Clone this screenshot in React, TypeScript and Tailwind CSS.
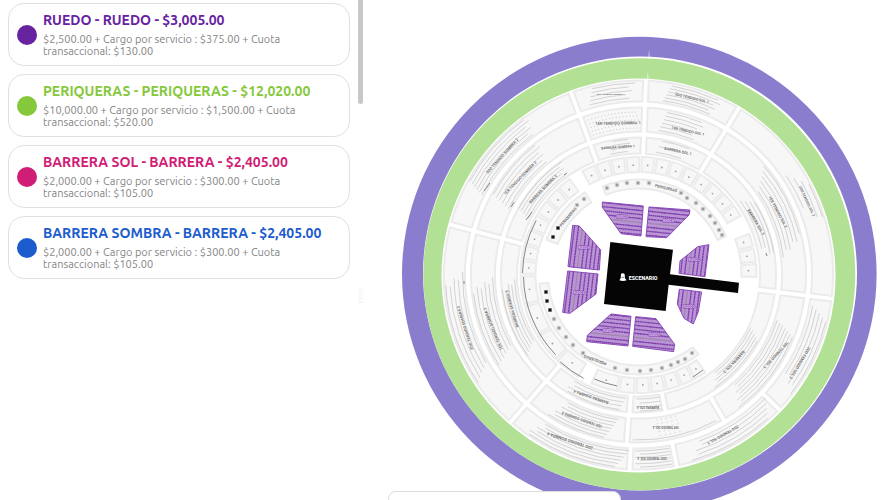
import { FC } from "react";

type Zone = {
  name: string;
  detail: string;
  dot: string;
  text: string;
};

const zones: Zone[] = [
  {
    name: "RUEDO - RUEDO - $3,005.00",
    detail: "$2,500.00 + Cargo por servicio : $375.00 + Cuota transaccional: $130.00",
    dot: "bg-[#67239f]",
    text: "text-[#67239f]",
  },
  {
    name: "PERIQUERAS - PERIQUERAS - $12,020.00",
    detail: "$10,000.00 + Cargo por servicio : $1,500.00 + Cuota transaccional: $520.00",
    dot: "bg-[#86c83c]",
    text: "text-[#86c83c]",
  },
  {
    name: "BARRERA SOL - BARRERA - $2,405.00",
    detail: "$2,000.00 + Cargo por servicio : $300.00 + Cuota transaccional: $105.00",
    dot: "bg-[#d01d75]",
    text: "text-[#d01d75]",
  },
  {
    name: "BARRERA SOMBRA - BARRERA - $2,405.00",
    detail: "$2,000.00 + Cargo por servicio : $300.00 + Cuota transaccional: $105.00",
    dot: "bg-[#1c5ccd]",
    text: "text-[#1c5ccd]",
  },
];

// centre of the arena, angles go clockwise from the top
const CX = 638.5;
const CY = 275;

const point = (r: number, angle: number) => {
  const a = (angle * Math.PI) / 180;
  return `${(CX + r * Math.sin(a)).toFixed(2)} ${(CY - r * Math.cos(a)).toFixed(2)}`;
};

const arc = (r: number, a0: number, a1: number) =>
  `M${point(r, a0)}A${r} ${r} 0 ${a1 - a0 > 180 ? 1 : 0} 1 ${point(r, a1)}`;

// gap is the white space in px left on each side of the sector
const sector = (r0: number, r1: number, a0: number, a1: number, gap = 0) => {
  const gi = (gap / r0) * 57.3;
  const go = (gap / r1) * 57.3;
  const large = a1 - a0 > 180 ? 1 : 0;
  return (
    `M${point(r1, a0 + go)}A${r1} ${r1} 0 ${large} 1 ${point(r1, a1 - go)}` +
    `L${point(r0, a1 - gi)}A${r0} ${r0} 0 ${large} 0 ${point(r0, a0 + gi)}Z`
  );
};

const rings = [
  { r0: 173, r1: 195, cuts: [-20.3, 2.2, 31, 97, 133.7, 168.7, 182.6, 221, 285, 339.7] },
  { r0: 143, r1: 168, cuts: [-20.3, 2.2, 31, 97, 149.5, 184, 221, 285, 339.7] },
  { r0: 121, r1: 138, cuts: [-20.3, 2.2, 31, 97, 168.8, 183.7, 221, 285, 339.7] },
];

const boxes = [
  [-29, -21.5, -14, -6.5, 1, 8.5, 16, 23.5, 31, 38.5, 46, 53.5, 60.5],
  [69, 76.5, 84, 91.5],
  [145, 152, 159, 166.5, 174, 181.5, 190, 204],
  [210, 224, 239, 255, 270, 277.5, 285, 293, 301, 309, 317, 325],
];

const tables = [
  [86, 96, -22, 66],
  [86, 99, 291, 327],
  [90, 100, 143, 265],
];

// [start angle, end angle, inner radius, outer radius, rows, slant]
const rows = [
  [-15, -2, 177, 192, 5, 1],
  [9, 25, 176, 192, 6, 1],
  [298, 324, 176, 193, 6, 1],
  [59, 71, 178, 193, 4, 3],
  [102, 126, 177, 193, 5, 2],
  [136, 162, 177, 193, 5, 2],
  [170, 181, 176, 192, 6, 0],
  [185, 214, 176, 193, 6, 2],
  [238, 269, 176, 193, 5, -2],
  [9, 23, 146, 165, 6, 1],
  [52, 80, 146, 166, 6, -3],
  [110, 141, 146, 166, 7, 2],
  [190, 211, 146, 166, 7, 2],
  [239, 267, 146, 166, 6, -2],
  [298, 322, 146, 166, 6, 1],
  [-12, -4, 124, 136, 4, 1],
  [9, 21, 124, 136, 3, 1],
  [56, 80, 126, 137, 4, 2],
  [117, 144, 124, 136, 5, 2],
  [170, 181, 124, 136, 4, 0],
  [187, 212, 124, 136, 4, 1],
  [236, 266, 124, 137, 5, -2],
  [298, 325, 124, 137, 5, 1],
];

type Label = [string, number, number, number, number];
// text, x, y, rotation, size
const labels: Label[] = [
  ["2DO TENDIDO SOMBRA 1", 611, 94, 0, 2.5],
  ["1ER TENDIDO SOMBRA 1", 618, 123, -1, 4],
  ["BARRERA SOMBRA 1", 618, 147, -4, 3.5],
  ["2DO TENDIDO SOL 1", 692, 98, 14, 3.8],
  ["1ER TENDIDO SOL 1", 688, 131, 12, 3.7],
  ["BARRERA SOL 1", 678, 151, 12, 3.8],
  ["2DO TENDIDO SOMBRA 2", 502, 156, -48, 4],
  ["1ER TENDIDO SOMBRA 2", 520, 178, -46, 4],
  ["BARRERA SOMBRA 2", 543, 189, -46, 4],
  ["2DO TENDIDO SOMBRA 3", 465, 328, -108, 4],
  ["1ER TENDIDO SOMBRA 3", 493, 329, -112, 4],
  ["BARRERA SOMBRA 3", 512, 309, -106, 4],
  ["2DO TENDIDO SOMBRA 4", 570, 441, 198, 4.2],
  ["1ER TENDIDO SOMBRA 4", 582, 420, 199, 3.8],
  ["BARRERA SOMBRA 4", 591, 397, 199, 3.8],
  ["BARRERA SOL 4", 648, 407, 180, 3],
  ["1ER TENDIDO SOL 4", 666, 427, 180, 2.9],
  ["2DO TENDIDO SOL 4", 652, 458, 180, 3.2],
  ["2DO TENDIDO SOL 3", 723, 435, 151, 3.8],
  ["2DO TENDIDO SOL 3", 800, 363, 121, 4],
  ["1ER TENDIDO SOL 3", 776, 355, 133, 3.9],
  ["BARRERA SOL 3", 734, 362, 133, 4],
  ["BARRERA SOL 2", 756, 222, 59, 4],
  ["1ER TENDIDO SOL 2", 778, 212, 62, 3.9],
  ["2DO TENDIDO SOL 2", 807, 201, 65, 3.6],
  ["PERIQUERAS", 666, 188, 14, 3.8],
  ["PERIQUERAS", 568, 217, -50, 4],
  ["PERIQUERAS", 595, 360, 199, 4],
];

const stars = [
  [607, 188], [617, 185], [627, 183], [638, 183], [649, 183], [681, 193], [687, 198],
  [696, 203], [703, 209], [710, 216], [715, 223], [719, 230], [722, 235],
  [584, 199], [577, 205], [554, 319], [559, 328], [566, 337], [573, 345], [583, 353],
  [615, 368], [627, 370], [640, 371], [651, 370], [662, 368], [671, 365], [678, 362],
  [685, 359], [692, 353],
];

const blackTables = [
  [558, 228], [553, 237], [546, 292], [547, 301], [550, 310],
];

// floor blocks round the stage, drawn on a 3x grid
const floor = [
  { id: "A", pts: "157,36 280,48 273,138 213,131 157,52", x: 217, y: 80, vertical: false },
  { id: "B", pts: "297,51 420,60 417,75 350,143 288,140", x: 355, y: 94, vertical: false },
  { id: "C", pts: "477,164 465,260 387,250 390,213 443,170", x: 433, y: 211, vertical: true },
  { id: "D", pts: "388,298 455,306 445,365 430,402 402,385 382,342", x: 418, y: 352, vertical: true },
  { id: "E", pts: "257,380 318,386 374,463 371,485 248,469", x: 313, y: 436, vertical: false },
  { id: "F", pts: "183,372 243,379 234,468 110,455 112,436", x: 176, y: 422, vertical: false },
  { id: "G", pts: "53,243 144,252 138,312 60,370 38,367", x: 87, y: 309, vertical: true },
  { id: "H", pts: "68,106 88,108 152,180 148,240 54,230", x: 102, y: 173, vertical: true },
];

const ZoneCard: FC<{ zone: Zone }> = ({ zone }) => (
  <li className="flex items-center gap-1.5 rounded-2xl border border-[#e0e0e0] bg-white py-2 pl-2 pr-3">
    <span className={`size-5 shrink-0 rounded-full ${zone.dot}`} />
    <div>
      <h2 className={`text-sm leading-4 font-bold ${zone.text}`}>{zone.name}</h2>
      <p className="pt-[5px] text-[11px] leading-3 text-[#858585]">{zone.detail}</p>
    </div>
  </li>
);

const Rows = () => (
  <g fill="none" stroke="#c9c9c9" strokeWidth="0.8">
    {rows.map(([a0, a1, r0, r1, n, slant], i) =>
      Array.from({ length: n }, (_, k) => {
        const t = k / (n - 1);
        const shift = slant * (t - 0.5) * 2;
        const r = r0 + (r1 - r0) * t;
        return <path key={`${i}-${k}`} d={arc(r, a0 + shift, a1 + shift - (k % 2) * 1.5)} />;
      })
    )}
    {/* dotted seats */}
    {[147, 151, 155, 159, 163].map((r) => (
      <path key={r} d={arc(r, -18, 0)} stroke="#b5b5b5" strokeDasharray="1 2.4" />
    ))}
    {[146, 150, 154, 158, 162].map((r) => (
      <path key={r} d={arc(r, 165, 173)} stroke="#b5b5b5" strokeDasharray="1 4" />
    ))}
    <path d={arc(165, 152, 182)} />
  </g>
);

const Floor = () => (
  <g transform="translate(550 190) scale(0.3333)">
    {floor.map((b) => (
      <g key={b.id}>
        <clipPath id={`block-${b.id}`}>
          <polygon points={b.pts} />
        </clipPath>
        <polygon points={b.pts} fill="#b995d3" />
        <g clipPath={`url(#block-${b.id})`}>
          <g transform={`rotate(${b.vertical ? 97 : 6} ${b.x} ${b.y})`} strokeWidth="4">
            {[-72, -60, -48, -36, -24, -12, 0, 12, 24, 36, 48, 60, 72].map((o, i) => (
              <path
                key={o}
                d={`M${b.x - 90} ${b.y + o}h180`}
                stroke={i === 7 ? "#9d84ab" : "#7c3aac"}
                strokeDasharray={i % 2 ? "5 1" : "8 1"}
              />
            ))}
          </g>
        </g>
        <polygon points={b.pts} fill="none" stroke="#8a4cba" strokeWidth="3" />
        <text
          x={b.x}
          y={b.y + 3}
          fontSize="8"
          fontWeight="700"
          textAnchor="middle"
          fill="#e3cff0"
          stroke="#8748b5"
          strokeWidth="3"
          paintOrder="stroke"
        >
          {`RUEDO ${b.id}`}
        </text>
      </g>
    ))}
    <polygon
      points="181,156 369,179 360,253 567,278 564,309 356,284 347,363 162,342"
      fill="#050505"
    />
    <path d="M213 253q0-3 5-3t6 3l1 12 5 6q-11 4-22 0l4-6z" fill="#fff" />
    <path d="M214 262h9" stroke="#050505" strokeWidth="1.5" />
    <text x="236" y="269" fontSize="16" fontWeight="800" fill="#fff">
      ESCENARIO
    </text>
  </g>
);

const VenueMap = () => (
  <svg
    viewBox="364 0 526 500"
    className="h-full w-full font-['Roboto','Liberation_Sans',sans-serif]"
    role="img"
    aria-label="Mapa de zonas"
  >
    <circle cx="639.3" cy="274" r="237.3" fill="#8b7dce" />
    <circle cx="640" cy="273.5" r="217" fill="#fff" />
    <circle cx="639.3" cy="274.3" r="216" fill="#b2e094" />
    <circle cx={CX} cy="275.5" r="197" fill="#fff" />
    <path d="M648.4 59l0.6-10 0.8 10zM647.2 80l0.6-9 0.8 9z" fill="#fff" opacity="0.7" />

    {/* soft grey rim, then the flat face of each section */}
    <g fill="#f7f7f7" stroke="#ebebeb" strokeWidth="2">
      {rings.map(({ r0, r1, cuts }) =>
        cuts.slice(0, -1).map((a, i) => (
          <path key={`${r0}-${i}`} d={sector(r0 + 0.5, r1 - 0.5, a, cuts[i + 1], 2.8)} />
        ))
      )}
      {boxes.map((cuts) =>
        cuts.slice(0, -1).map((a, i) => (
          <path key={a} d={sector(103, 118, a, cuts[i + 1], 1.2)} />
        ))
      )}
      {tables.map(([r0, r1, a0, a1]) => (
        <path key={a0} d={sector(r0 + 0.5, r1 - 0.5, a0, a1)} />
      ))}
    </g>

    {/* seat mark in every box */}
    {boxes.map((cuts) =>
      cuts.slice(0, -1).map((a, i) => {
        const [x, y] = point(110, (a + cuts[i + 1]) / 2).split(" ");
        return <circle key={a} cx={x} cy={y} r="0.9" fill="#a3a3a3" />;
      })
    )}

    <Rows />

    <g fill="none" stroke="#777" strokeWidth="0.9">
      <path d={arc(116, 271, 298)} />
      <path d={arc(115, 226, 269)} />
      <path d={arc(117, 208, 222)} />
      <path d={arc(113, 191, 203)} />
      <path d="M693 377l10-7M564 175l3-2M484 191l6-8M511 207l3-5M526 220l6-8M766 253l1 3M464 281v3" />
    </g>

    <g stroke="#999" strokeWidth="1">
      {stars.map(([x, y]) => (
        <path
          key={`${x}-${y}`}
          d={`M${x - 2.2} ${y}h4.4M${x} ${y - 2.2}v4.4M${x - 1.4} ${y - 1.4}l2.8 2.8M${x + 1.4} ${y - 1.4}l-2.8 2.8`}
        />
      ))}
    </g>
    {blackTables.map(([x, y]) => (
      <path key={y} d={`M${x - 1.5} ${y - 1.5}h3v3h-3z`} fill="#111" stroke="#444" strokeWidth="0.4" />
    ))}

    {labels.map(([text, x, y, rot, size]) => (
      <text
        key={`${text}-${x}`}
        transform={`translate(${x} ${y}) rotate(${rot})`}
        y={size * 0.36}
        fontSize={size}
        fontWeight="600"
        textAnchor="middle"
        fill="#666"
        stroke="#f7f7f7"
        strokeWidth="0.6"
        paintOrder="stroke"
      >
        {text}
      </text>
    ))}

    <Floor />
  </svg>
);

export default function App() {
  return (
    <main className="flex h-screen overflow-hidden bg-white font-['Ubuntu','Noto_Sans',sans-serif]">
      <aside className="flex w-[364px] shrink-0 items-start justify-between pr-px">
        <ul className="flex flex-1 flex-col gap-2 pt-[3px] pr-2 pl-2">
          {zones.map((zone) => (
            <ZoneCard key={zone.name} zone={zone} />
          ))}
        </ul>
        <div className="flex h-[303px] w-[5px] flex-col justify-between">
          <span className="h-[104px] rounded-b-full bg-[#c8c8c8]" />
          <span className="h-4 border-b border-[#eeeeee] bg-[#fafafa]" />
        </div>
      </aside>
      <section className="relative min-w-0 flex-1">
        <VenueMap />
        <div className="absolute -bottom-6 left-6 h-[33px] w-[233px] rounded-lg border border-[#dddddd] bg-white" />
      </section>
    </main>
  );
}
